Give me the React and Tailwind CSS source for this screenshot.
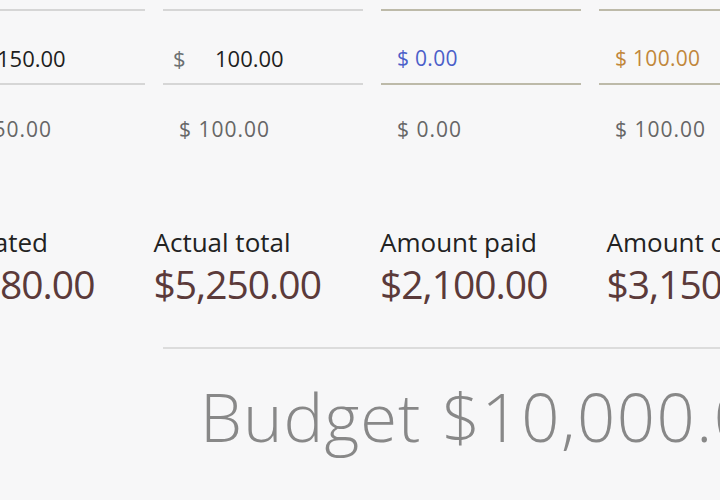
import React from "react";

const items = [
  { value: "150.00", paid: "$ 150.00", style: "input", border: "border-[#d6d6d6]" },
  { value: "100.00", paid: "$ 100.00", style: "input", border: "border-[#d6d6d6]" },
  { value: "$ 0.00", paid: "$ 0.00", style: "blue", border: "border-[#bdbaa9]" },
  { value: "$ 100.00", paid: "$ 100.00", style: "orange", border: "border-[#bdbaa9]" },
];

const totals = [
  { label: "Estimated", amount: "$5,180.00" },
  { label: "Actual total", amount: "$5,250.00" },
  { label: "Amount paid", amount: "$2,100.00" },
  { label: "Amount owed", amount: "$3,150.00" },
];

const ItemColumn = ({ item }) => {
  return (
    <div className="w-[200px] shrink-0">
      <div className={`h-[76px] border-t-2 border-b-2 ${item.border} flex items-end pb-[10px]`}>
        {item.style === "input" ? (
          <div className="flex items-center h-[30px] text-[22px] leading-[30px]">
            <span className="w-[52px] pl-[10px] text-[#6b7072]">$</span>
            <span className="text-[#1e1e1e]">{item.value}</span>
          </div>
        ) : (
          <span
            className={`pl-[16px] h-[30px] text-[21px] leading-[30px] tracking-[0.3px] ${
              item.style === "blue" ? "text-[#4b5fc9]" : "text-[#c1873a]"
            }`}
          >
            {item.value}
          </span>
        )}
      </div>
      <p className="mt-[29px] pl-[16px] text-[21px] leading-[30px] text-[#666666] tracking-[1px]">
        {item.paid}
      </p>
    </div>
  );
};

export default function App() {
  return (
    <div
      className="w-[720px] h-[500px] overflow-hidden bg-[#f7f7f8] whitespace-nowrap"
      style={{ fontFamily: "'Open Sans', 'Noto Sans', sans-serif" }}
    >
      <div className="pt-[9px] ml-[-55px] flex gap-[18px]">
        {items.map((item, i) => (
          <ItemColumn key={i} item={item} />
        ))}
      </div>

      <div className="mt-[81px] ml-[-73px] flex">
        {totals.map((t, i) => (
          <div key={i} className="w-[226.5px] shrink-0">
            <p className="text-[26px] leading-[34px] text-[#222222]">{t.label}</p>
            <p className="text-[39px] leading-[50px] tracking-[-1px] text-[#5b3a3a]">{t.amount}</p>
          </div>
        ))}
      </div>

      <div className="mt-[38px] ml-[163px] border-t-2 border-[#dcdcdc]" />

      <p className="pl-[200px] mt-[27px] text-[67px] leading-[80px] font-light text-[#888888]">
        <span className="tracking-[1px]">Budget</span>{" "}
        <span className="ml-[3px] tracking-[1.5px]">$10,000.00</span>
      </p>
    </div>
  );
}
